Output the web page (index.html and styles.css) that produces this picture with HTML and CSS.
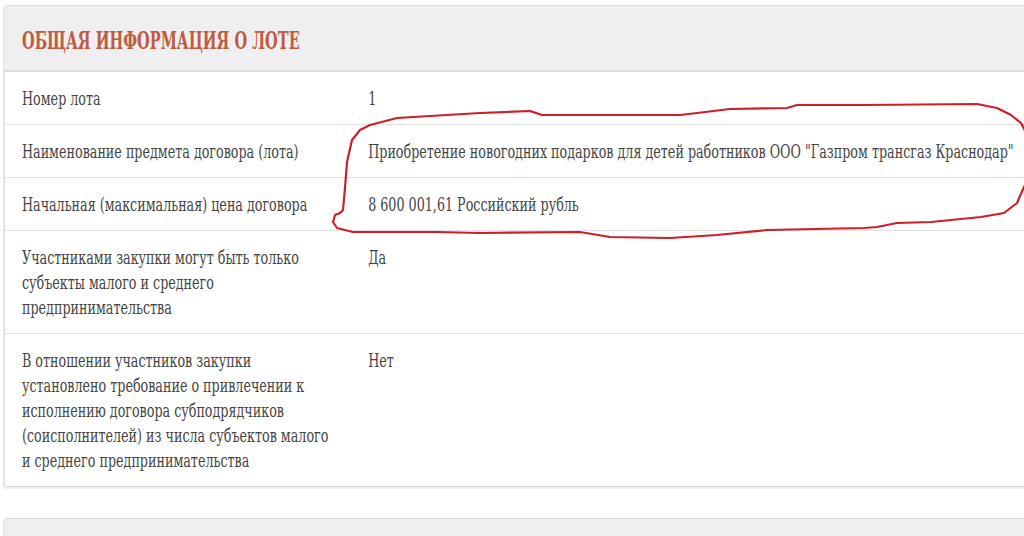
FILE: index.html
```html
<!DOCTYPE html>
<html lang="ru">
<head>
<meta charset="utf-8">
<title>Общая информация о лоте</title>
<link rel="stylesheet" href="styles.css">
</head>
<body>
<div class="page">
  <section class="card">
    <header class="card-head">
      <h2 class="card-title">ОБЩАЯ ИНФОРМАЦИЯ О ЛОТЕ</h2>
    </header>
    <div class="rows">
      <div class="row">
        <div class="label">Номер лота</div>
        <div class="value">1</div>
      </div>
      <div class="row">
        <div class="label">Наименование предмета договора (лота)</div>
        <div class="value">Приобретение новогодних подарков для детей работников ООО "Газпром трансгаз Краснодар"</div>
      </div>
      <div class="row">
        <div class="label">Начальная (максимальная) цена договора</div>
        <div class="value">8 600 001,61 Российский рубль</div>
      </div>
      <div class="row">
        <div class="label">Участниками закупки могут быть только субъекты малого и среднего предпринимательства</div>
        <div class="value">Да</div>
      </div>
      <div class="row">
        <div class="label">В отношении участников закупки установлено требование о привлечении к исполнению договора субподрядчиков (соисполнителей) из числа субъектов малого и среднего предпринимательства</div>
        <div class="value">Нет</div>
      </div>
    </div>
  </section>
  <section class="card card-next">
    <header class="card-head"></header>
  </section>
</div>
<svg class="markup" width="1024" height="536" viewBox="0 0 1024 536" aria-hidden="true">
  <polyline fill="none" stroke="#cc1f2a" stroke-width="2.2" stroke-linejoin="round" stroke-linecap="round"
    points="480,113 530,111 542,115 680,115 697,113 730,109 787,108 797,105 864,105 977,104 997,108 1011,115 1021,123 1030,140 1030,175 1024,187 1017,203 1004,213 981,217 931,222 897,223 877,227 864,228 767,230 717,235 670,238 610,237 580,232 480,233 437,232 387,232 353,232 337,228 333,222 335,215 340,213 343,210 345,188 347,162 352,140 360,130 370,125 397,118 430,116 480,113"/>
</svg>
</body>
</html>
```

FILE: styles.css
```css
html, body {
  margin: 0;
  padding: 0;
  background: #ffffff;
  overflow: hidden;
}

body {
  width: 1024px;
  height: 536px;
  position: relative;
  font-family: "DejaVu Serif Condensed", "DejaVu Serif", serif;
  font-stretch: condensed;
  color: #454545;
}

/* the whole sheet is rendered horizontally compressed, as in the reference */
.page {
  width: 1330px;
  padding: 5px 0 0 5px;
  display: flex;
  flex-direction: column;
  gap: 31px;
  transform: scaleX(0.785);
  transform-origin: 0 0;
}

.card {
  width: 1340px;
  background: #fff;
  border: 1px solid #d6d6d8;
  border-radius: 3px;
  box-shadow: 0 2px 2px rgba(0, 0, 0, 0.08);
}

.card-head {
  height: 64px;
  background: #efeff1;
  border-bottom: 2px solid #d9d9dc;
  display: flex;
  align-items: center;
  padding-left: 22px;
}

.card-title {
  margin: 4px 0 0;
  font-size: 25px;
  font-weight: bold;
  color: #c25b3d;
  white-space: nowrap;
  transform: scaleX(0.825);
  transform-origin: 0 50%;
}

.rows {
  display: flex;
  flex-direction: column;
}

.row {
  display: grid;
  grid-template-columns: 463px 1fr;
  border-bottom: 1px solid #e1e1e3;
  font-size: 18px;
  line-height: 25px;
}

.row:last-child {
  border-bottom: none;
}

.label {
  padding: 14px 42px 13px 22px;
}

.value {
  padding: 14px 22px 13px 0;
}

.markup {
  position: absolute;
  left: 0;
  top: 0;
  pointer-events: none;
}
```
